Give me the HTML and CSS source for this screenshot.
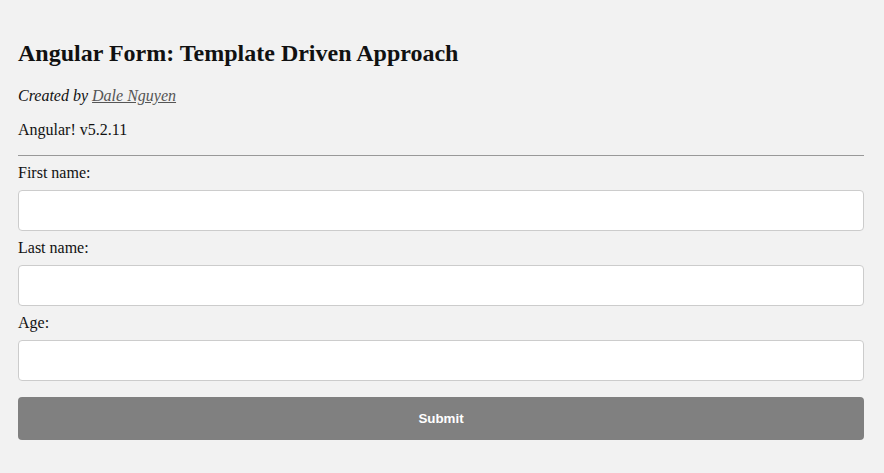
FILE: index.html
```html
<!DOCTYPE html>
<html>
<head>
<meta charset="utf-8">
<link rel="stylesheet" href="styles.css">
</head>
<body>
<div class="app">
  <h2 class="title">Angular Form: Template Driven Approach</h2>
  <p class="byline"><em>Created by <a href="#" class="author">Dale Nguyen</a></em></p>
  <p class="version">Angular! v5.2.11</p>
  <hr class="rule">
  <form class="form">
    <label class="label">First name:</label>
    <input class="field" type="text">
    <label class="label">Last name:</label>
    <input class="field" type="text">
    <label class="label">Age:</label>
    <input class="field" type="text">
    <button class="submit" type="button">Submit</button>
  </form>
</div>
</body>
</html>
```
FILE: styles.css
```css
html, body {
  margin: 0;
  padding: 0;
  background: #f2f2f2;
}
body {
  font-family: "Liberation Serif", "Times New Roman", serif;
  font-size: 16px;
  color: #111;
}
.app {
  padding: 20px 20px 20px 18px;
}
.title {
  font-size: 24px;
  font-weight: bold;
  margin: 20px 0;
  color: #111;
}
.byline, .version {
  margin: 16px 0;
}
.author {
  color: #555;
}
.rule {
  border: none;
  border-top: 1px solid #999;
  margin: 16px 0 8px;
  height: 0;
}
.form {
  display: flex;
  flex-direction: column;
}
.label {
  display: block;
}
.field {
  display: block;
  box-sizing: border-box;
  width: 100%;
  margin: 8px 0;
  padding: 12px 20px;
  border: 1px solid #ccc;
  border-radius: 4px;
  background: #fff;
  font-family: "Liberation Sans", Arial, sans-serif;
  font-size: 13.333px;
  line-height: 15px;
  height: 41px;
}
.submit {
  display: block;
  width: 100%;
  margin-top: 8px;
  height: 43px;
  border: none;
  border-radius: 4px;
  background: #808080;
  color: #fff;
  font-family: "Liberation Sans", Arial, sans-serif;
  font-size: 13.333px;
  font-weight: bold;
}
```
